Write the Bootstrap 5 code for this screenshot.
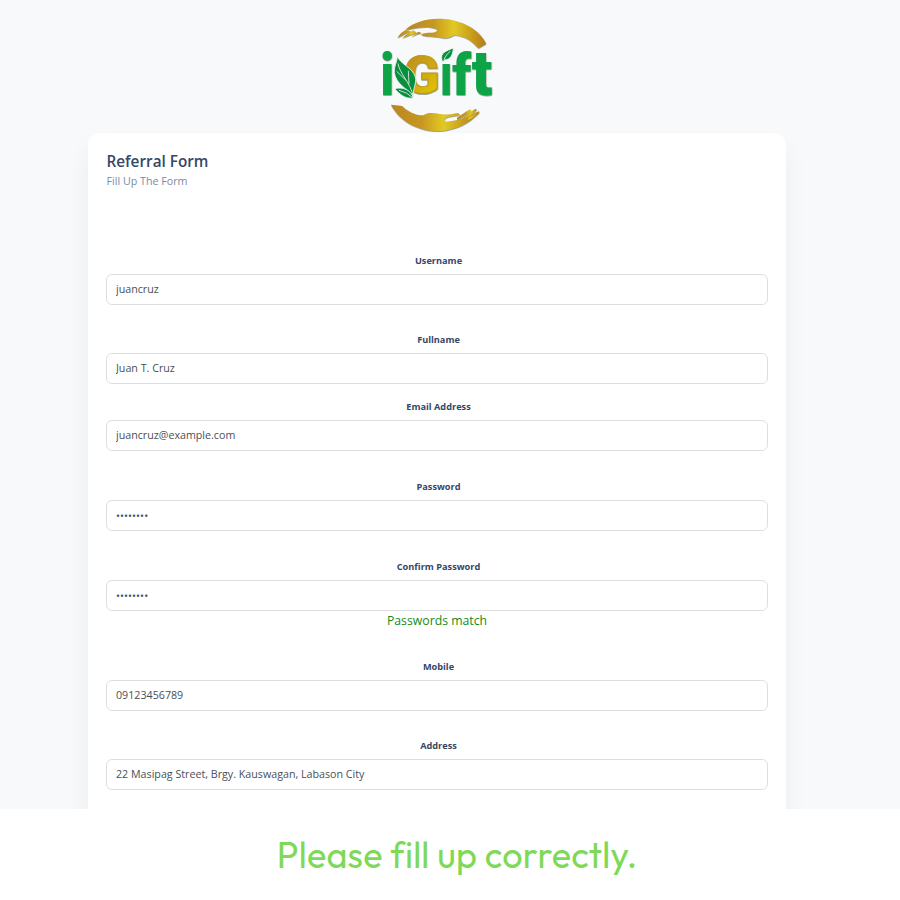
<!DOCTYPE html>
<html lang="en">
<head>
<meta charset="utf-8">
<meta name="viewport" content="width=device-width, initial-scale=1">
<title>Referral Form</title>
<link href="https://cdn.jsdelivr.net/npm/bootstrap@5.3.0/dist/css/bootstrap.min.css" rel="stylesheet">
<style>
body{font-family:"Open Sans",sans-serif;background:#fff;color:#344767}
.stage{height:809px;background:#f8f9fb}
.brand-row{height:133px;padding:10px 0 0 370px}
.brand-row svg{display:block;flex:none}
.form-card{width:698px;height:760px;margin-left:88px;padding:18px 18px;border:0;border-radius:12px;box-shadow:0 15px 24px rgba(0,0,0,.055)}
.form-title{font-size:15.3px;line-height:20px;font-weight:600;color:#344767;padding-left:.5px}
.form-sub{font-size:10.7px;line-height:21px;color:#7b8ba5;padding-left:.5px}
.fields{padding-top:62px}
.field{height:79.4px}
.field-short{height:67px}
.field-tall{height:99.8px}
.field-pass{height:80px}
.form-label{height:20px;line-height:14px;font-size:9.2px;font-weight:700;padding-left:3px}
.form-control{height:31px;padding:0 9px 1px;font-size:10.7px;line-height:28px;color:#495057;border:1px solid #dcdfe2;border-radius:6px}
.form-control[type=password]{padding:1px 9px 0}
.match-note{font-size:12.25px;line-height:19px;color:#148a14}
.caption-text{height:91px;padding-left:14px;font-family:Outfit,Lato,sans-serif;font-size:36px;line-height:92px;letter-spacing:.2px;color:#7ed957}
</style>
<script src="https://cdn.jsdelivr.net/npm/bootstrap@5.3.0/dist/js/bootstrap.bundle.min.js"></script>
</head>
<body class="overflow-hidden">
<main class="stage overflow-hidden">
  <header class="brand-row">
    <svg width="135" height="130" viewBox="0 0 405 390" role="img" aria-label="iGift">
      <defs>
        <linearGradient id="gold" x1="0" x2="1"><stop stop-color="#ba8521"/><stop offset=".35" stop-color="#c79720"/><stop offset=".6" stop-color="#e2c922"/><stop offset="1" stop-color="#b47a19"/></linearGradient>
        <linearGradient id="goldV" x1="0" y1="0" x2=".6" y2="1"><stop stop-color="#b77d2b"/><stop offset="1" stop-color="#e0c600"/></linearGradient>
        <filter id="bevel" x="-10%" y="-10%" width="120%" height="130%"><feDropShadow dx="1" dy="2" stdDeviation="1" flood-color="#3b4a20" flood-opacity=".7"/></filter>
      </defs>
      <g fill="url(#gold)" filter="url(#bevel)">
        <path d="M106 59C136 34 176 24 221 27C276 31 328 58 348 101L325 115C304 91 284 78 253 75C241 84 224 87 207 82C188 78 171 81 153 74C157 69 171 68 187 68C199 67 206 60 198 56C173 46 146 52 106 59Z"/>
        <path d="M82 84Q92 66 109 59L124 64Q99 72 82 84ZM96 85Q113 68 130 61L139 68Q117 75 96 85ZM124 81Q134 69 146 65L154 69Q137 72 124 81Z"/>
        <path d="M63 284L96 288C113 305 137 317 160 316C177 304 198 310 216 313C233 315 249 312 264 309L270 315L237 320C221 324 218 334 230 335C263 334 295 319 326 307C300 342 252 361 211 363C151 365 91 338 63 284Z"/>
        <path d="M261 323L290 304Q301 296 303 300Q300 312 261 329ZM278 326L305 304Q316 294 320 298Q315 311 278 331ZM293 325L317 308Q328 302 328 306Q323 317 293 331Z"/>
      </g>
      <g font-family="Roboto" font-weight="900" fill="#08a346" filter="url(#bevel)">
        <text x="31" y="256" font-size="178" textLength="42" lengthAdjust="spacingAndGlyphs">i</text>
        <text x="100" y="248" font-size="158" textLength="109" lengthAdjust="spacingAndGlyphs" fill="url(#goldV)" stroke="#c29818" stroke-width="3">G</text>
        <text x="210" y="256" font-size="178" textLength="37" lengthAdjust="spacingAndGlyphs">ı</text>
        <text x="247" y="256" font-size="171" textLength="57" lengthAdjust="spacingAndGlyphs">f</text>
        <text x="305" y="256" font-size="189" textLength="62" lengthAdjust="spacingAndGlyphs">t</text>
      </g>
      <g fill="#078e3e" stroke="#f5f9f4" stroke-width="2.5">
        <path d="M82 138C89 162 127 171 136 201C141 221 127 236 131 258C111 237 78 222 73 188C71 168 82 157 82 138Z"/>
        <path d="M74 236C98 230 123 239 130 264C104 268 89 252 74 236Z"/>
        <path d="M216 151C209 128 229 123 250 114C249 135 240 151 224 149L219 156Z"/>
        <path d="M84 160C88 190 120 216 130 259M80 184L108 211M115 182L117 222M87 241Q112 247 128 263M222 148Q228 134 241 123" fill="none" stroke="#e8f3e6" stroke-width="2.5"/>
      </g>
    </svg>
  </header>
  <section class="card form-card">
    <h1 class="form-title mb-0">Referral Form</h1>
    <p class="form-sub mb-0">Fill Up The Form</p>
    <form class="fields text-center">
      <div class="field"><label class="form-label d-block mb-0" for="username">Username</label><input id="username" class="form-control" value="juancruz"></div>
      <div class="field field-short"><label class="form-label d-block mb-0" for="fullname">Fullname</label><input id="fullname" class="form-control" value="Juan T. Cruz"></div>
      <div class="field"><label class="form-label d-block mb-0" for="email">Email Address</label><input id="email" class="form-control" value="juancruz@example.com"></div>
      <div class="field field-pass"><label class="form-label d-block mb-0" for="password">Password</label><input id="password" type="password" class="form-control" value="password"></div>
      <div class="field field-tall"><label class="form-label d-block mb-0" for="confirm">Confirm Password</label><input id="confirm" type="password" class="form-control" value="password"><div class="match-note">Passwords match</div></div>
      <div class="field"><label class="form-label d-block mb-0" for="mobile">Mobile</label><input id="mobile" class="form-control" value="09123456789"></div>
      <div class="field"><label class="form-label d-block mb-0" for="address">Address</label><input id="address" class="form-control" value="22 Masipag Street, Brgy. Kauswagan, Labason City"></div>
    </form>
  </section>
</main>
<footer class="caption-text text-center text-nowrap">Please fill up correctly.</footer>
</body>
</html>
